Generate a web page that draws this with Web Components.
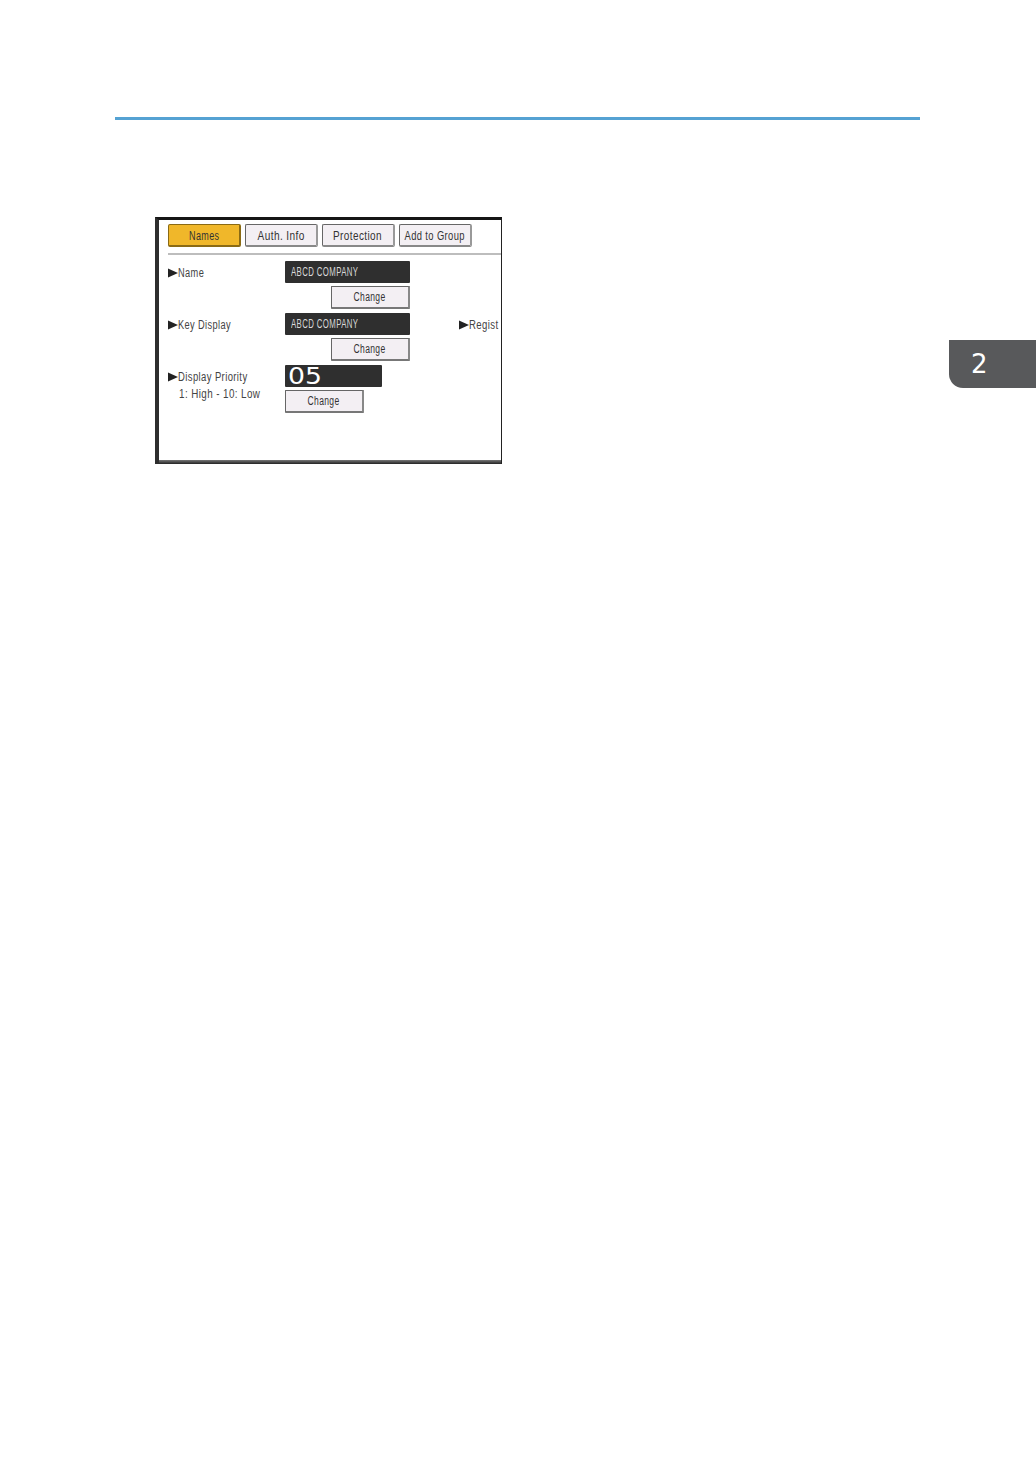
<!DOCTYPE html>
<html>
<head>
<meta charset="utf-8">
<title>Names</title>
<style>
  html, body { margin: 0; background: #fff; }
  body { font-family: "Liberation Sans", Arial, sans-serif; }
</style>
</head>
<body>
<manual-page>
  <device-screen>
    <screen-tab active style="--sx:.75">Names</screen-tab>
    <screen-tab style="--sx:.84">Auth. Info</screen-tab>
    <screen-tab style="--sx:.83">Protection</screen-tab>
    <screen-tab style="--sx:.78">Add to Group</screen-tab>

    <form-row slot="rows">
      <arrow-label slot="label" style="--sx:.77">Name</arrow-label>
      <value-field>ABCD COMPANY</value-field>
      <change-button end>Change</change-button>
    </form-row>
    <form-row slot="rows">
      <arrow-label slot="label" style="--sx:.77">Key Display</arrow-label>
      <value-field>ABCD COMPANY</value-field>
      <change-button end>Change</change-button>
      <arrow-label slot="extra" style="--sx:.8">Regist</arrow-label>
    </form-row>
    <form-row slot="rows">
      <arrow-label slot="label" hint="1: High - 10: Low">Display Priority</arrow-label>
      <value-field big><span>05</span></value-field>
      <change-button>Change</change-button>
    </form-row>
  </device-screen>
  <chapter-tab>2</chapter-tab>
</manual-page>

<script>
  class ManualPage extends HTMLElement {
    constructor() {
      super();
      this.attachShadow({ mode: 'open' }).innerHTML = `
        <style>
          :host { display: block; position: relative; height: 1470px; overflow: hidden; background: #fff; }
          .head { margin: 0 116px 0 115px; padding-top: 117px; }
          .rule { height: 3px; background: #55a2d3; }
          .body { padding: 97px 0 0 155px; }
        </style>
        <div class="head"><div class="rule"></div></div>
        <div class="body"><slot></slot></div>
      `;
    }
  }

  class DeviceScreen extends HTMLElement {
    constructor() {
      super();
      this.attachShadow({ mode: 'open' }).innerHTML = `
        <style>
          :host { display: block; position: relative; width: 347px; height: 247px; box-sizing: border-box;
            border-style: solid; border-color: #151515 #222 transparent #2e2e2e; border-width: 3px 1.5px 0 4px;
            background: #fff; overflow: hidden; }
          .tabs { display: flex; gap: 4px; padding: 4px 0 0 9px; }
          .line { height: 2px; margin: 6px 0 6px 9px; background: #bdbdbd; }
          .rows { display: flex; flex-direction: column; gap: 4px; padding-left: 9px; }
          .bottom { position: absolute; left: 0; right: 0; bottom: 0; height: 4px;
            background: linear-gradient(#777, #222); }
        </style>
        <div class="tabs"><slot></slot></div>
        <div class="line"></div>
        <div class="rows"><slot name="rows"></slot></div>
        <div class="bottom"></div>
      `;
    }
  }

  // the panel font is tall, narrow and airy: letter-spacing plus a sideways squeeze (--sx)
  class ScreenTab extends HTMLElement {
    constructor() {
      super();
      this.attachShadow({ mode: 'open' }).innerHTML = `
        <style>
          :host { display: flex; align-items: center; justify-content: center; box-sizing: border-box;
            width: 73px; height: 23px; padding-top: 1px; font-size: 12px; letter-spacing: .5px; white-space: nowrap; color: #333;
            background: #f3eff3; border: 1px solid #666; border-bottom: 2px solid #888; border-right: 2px solid #999;
            border-radius: 2px; }
          :host([active]) { background: #f0b72a; border-color: #8a6a14; }
          span { display: inline-block; transform: scaleX(var(--sx, 1)); }
        </style>
        <span><slot></slot></span>
      `;
    }
  }

  class FormRow extends HTMLElement {
    constructor() {
      super();
      this.attachShadow({ mode: 'open' }).innerHTML = `
        <style>
          :host { display: grid; grid-template-columns: 117px 125px auto; white-space: nowrap; }
          .stack { display: flex; flex-direction: column; gap: 3px; }
          .extra { padding-left: 49px; }
        </style>
        <div><slot name="label"></slot></div>
        <div class="stack"><slot></slot></div>
        <div class="extra"><slot name="extra"></slot></div>
      `;
    }
  }

  class ArrowLabel extends HTMLElement {
    constructor() {
      super();
      const hint = this.getAttribute('hint');
      this.attachShadow({ mode: 'open' }).innerHTML = `
        <style>
          :host { display: block; padding-top: 6px; font-size: 12px; line-height: 13px; letter-spacing: .5px; color: #444; }
          .top { display: flex; align-items: center; }
          svg { width: 10px; height: 10px; flex: none; margin-top: -1px; }
          span { display: inline-block; transform: scaleX(var(--sx, .79)); transform-origin: left center; }
          .hint { margin: 4px 0 0 11px; --sx: .82; }
        </style>
        <div class="top"><svg viewBox="0 0 10 10"><path d="M0 0.5L10 5L0 9.5Z" fill="#222"/></svg><span><slot></slot></span></div>
        ${hint ? `<div class="hint"><span>${hint}</span></div>` : ''}
      `;
    }
  }

  class ValueField extends HTMLElement {
    constructor() {
      super();
      this.attachShadow({ mode: 'open' }).innerHTML = `
        <style>
          :host { display: flex; align-items: center; box-sizing: border-box; width: 125px; height: 22px;
            padding-left: 6px; font-size: 12px; letter-spacing: .6px; color: #d8d8d8; background: #2f2f2f; border-radius: 1px; }
          :host([big]) { width: 97px; padding-left: 3px; font-family: "DejaVu Sans", sans-serif;
            font-size: 23px; letter-spacing: 0; color: #fff; --sx: 1.16; }
          span { display: inline-block; transform: scaleX(var(--sx, .65)); transform-origin: left center; white-space: nowrap; }
        </style>
        <span><slot></slot></span>
      `;
    }
  }

  class ChangeButton extends HTMLElement {
    constructor() {
      super();
      this.attachShadow({ mode: 'open' }).innerHTML = `
        <style>
          :host { display: flex; align-items: center; justify-content: center; box-sizing: border-box;
            width: 79px; height: 23px; font-size: 12px; letter-spacing: .5px; color: #333; background: #f3eff3;
            border: 1px solid #666; border-bottom: 2px solid #777; border-right: 2px solid #888; border-radius: 1px; }
          :host([end]) { align-self: flex-end; }
          span { display: inline-block; transform: scaleX(.71); }
        </style>
        <span><slot></slot></span>
      `;
    }
  }

  class ChapterTab extends HTMLElement {
    constructor() {
      super();
      this.attachShadow({ mode: 'open' }).innerHTML = `
        <style>
          :host { position: absolute; left: 949px; top: 340px; width: 87px; height: 48px; box-sizing: border-box;
            padding: 5px 0 0 22px; background: #58595b; border-bottom-left-radius: 14px;
            font-family: "DejaVu Sans", sans-serif; font-size: 26px; line-height: 38px; color: #fff; }
        </style>
        <slot></slot>
      `;
    }
  }

  customElements.define('manual-page', ManualPage);
  customElements.define('device-screen', DeviceScreen);
  customElements.define('screen-tab', ScreenTab);
  customElements.define('form-row', FormRow);
  customElements.define('arrow-label', ArrowLabel);
  customElements.define('value-field', ValueField);
  customElements.define('change-button', ChangeButton);
  customElements.define('chapter-tab', ChapterTab);
</script>
</body>
</html>
